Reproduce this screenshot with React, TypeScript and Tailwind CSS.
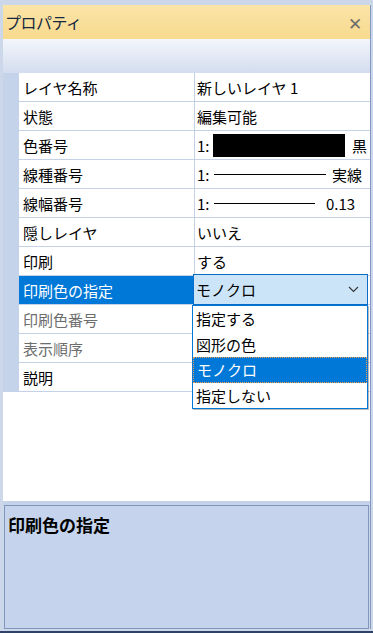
import React from 'react';

type Row = {
  label: string;
  value?: React.ReactNode;
  disabled?: boolean;
  selected?: boolean;
};

const Chevron: React.FC = () => (
  <svg width="11" height="7" viewBox="0 0 11 7" className="text-[#333]">
    <path d="M1 1 L5.5 5.5 L10 1" fill="none" stroke="currentColor" strokeWidth="1.1" />
  </svg>
);

const rows: Row[] = [
  { label: 'レイヤ名称', value: '新しいレイヤ 1' },
  { label: '状態', value: '編集可能' },
  {
    label: '色番号',
    value: (
      <div className="flex items-center">
        <span className="w-[16px]">1:</span>
        <span className="w-[132px] h-[23px] bg-black" />
        <span className="ml-[7px]">黒</span>
      </div>
    ),
  },
  {
    label: '線種番号',
    value: (
      <div className="flex items-center">
        <span className="w-[17px]">1:</span>
        <span className="w-[112px] h-[1px] bg-black" />
        <span className="ml-[6px]">実線</span>
      </div>
    ),
  },
  {
    label: '線幅番号',
    value: (
      <div className="flex items-center">
        <span className="w-[17px]">1:</span>
        <span className="w-[101px] h-[1px] bg-black" />
        <span className="ml-[11px]">0.13</span>
      </div>
    ),
  },
  { label: '隠しレイヤ', value: 'いいえ' },
  { label: '印刷', value: 'する' },
  { label: '印刷色の指定', selected: true },
  { label: '印刷色番号', disabled: true },
  { label: '表示順序', disabled: true },
  { label: '説明' },
];

const options = ['指定する', '図形の色', 'モノクロ', '指定しない'];

const App: React.FC = () => {
  return (
    <div className="w-[373px] h-[633px] bg-[#cdd7ea] pt-[5px] pl-[3px] overflow-hidden flex flex-col font-['Noto_Sans_CJK_JP','Noto_Sans',sans-serif] text-[15px] text-black leading-none">
      <div className="w-[368px] h-[624px] border-r border-[#8298c2] flex flex-col">
        {/* Title */}
        <div className="h-[34px] bg-linear-to-b from-[#fbe4a8] to-[#f8da8e] flex items-center justify-between pl-[2px] pr-[8px]">
          <span className="text-[16px] text-[#15283e] tracking-[-0.5px]">プロパティ</span>
          <span className="text-[17px] text-[#6e6e6e]">✕</span>
        </div>

        {/* Toolbar */}
        <div className="h-[34px] bg-linear-to-b from-[#f3f6fb] to-[#d3ddef]" />

        {/* Grid */}
        <div className="h-[428px] bg-white flex flex-col">
          <div className="flex">
            <div className="w-[16px] bg-[#c4d2ea]" />
            <div className="flex-1 flex flex-col">
              {rows.map((r) => (
                <div key={r.label} className="h-[29px] flex border-b border-[#c5d1e6]">
                  <div
                    className={`w-[176px] border-r border-[#c5d1e6] flex items-center pl-[4px] ${
                      r.selected ? 'bg-[#0078d7] text-white' : r.disabled ? 'text-[#6d6d6d]' : ''
                    }`}
                  >
                    {r.label}
                  </div>
                  <div className="flex-1 relative flex items-center pl-[2px]">
                    {r.value}
                    {r.selected && (
                      <>
                        <div className="absolute left-[-2px] top-[-2px] w-[175px] h-[31px] border border-[#0a6cc4] bg-[#cce4f7] flex items-center justify-between pl-[2px] pr-[8px] z-10">
                          <span>モノクロ</span>
                          <Chevron />
                        </div>
                        <div className="absolute left-[-3px] top-[29px] w-[176px] h-[104px] border border-[#0078d7] bg-white flex flex-col z-10 shadow-[1px_1px_0_rgba(120,120,120,0.5)]">
                          {options.map((o) => (
                            <div
                              key={o}
                              className={`h-[25.5px] flex items-center pl-[3px] ${
                                o === 'モノクロ'
                                  ? 'bg-[#0078d7] text-white border border-dotted border-[#f0a050]'
                                  : ''
                              }`}
                            >
                              {o}
                            </div>
                          ))}
                        </div>
                      </>
                    )}
                  </div>
                </div>
              ))}
            </div>
          </div>
          <div className="flex-1 bg-white" />
        </div>

        {/* Separator */}
        <div className="h-[4px] bg-[#c5d3ea]" />

        {/* Description */}
        <div className="h-[124px] mx-[1px] border border-[#8096bd] bg-[#c5d4ec] px-[3px] pt-[10px]">
          <span className="text-[17px] font-bold">印刷色の指定</span>
        </div>
      </div>
      <div className="h-[2px]" />
      <div className="h-[2px] bg-[#2d4266] ml-[-3px]" />
    </div>
  );
};

export default App;
